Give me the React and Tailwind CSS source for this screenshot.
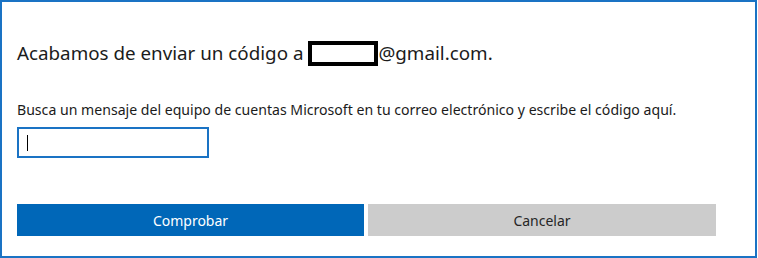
const App = () => {
  return (
    <div
      className="w-[758px] h-[258px] bg-white overflow-hidden"
      style={{ fontFamily: '"Noto Sans", "Open Sans", sans-serif' }}
    >
      <div className="w-[757px] h-[258px] border-t-2 border-l-2 border-b-2 border-r-2 border-[#1a73c4] pl-[15px] pt-[39px]">
        {/* heading */}
        <h1 className="flex items-center h-[25px] text-[18.8px] leading-[25px] text-[#1b1b1b] font-normal">
          <span>Acabamos de enviar un código a</span>
          <span className="inline-block ml-[5px] w-[70px] h-[25px] border-4 border-black bg-white"></span>
          <span>@gmail.com.</span>
        </h1>

        {/* description */}
        <p className="mt-[35px] text-[14.1px] leading-[18px] text-[#1b1b1b]">
          Busca un mensaje del equipo de cuentas Microsoft en tu correo electrónico y escribe el código aquí.
        </p>

        {/* code input with caret */}
        <div className="mt-[8px] w-[192px] h-[31px] border-2 border-[#1a73c4] flex items-center pl-[8px]">
          <span className="w-px h-[16px] bg-black"></span>
        </div>

        {/* buttons */}
        <div className="mt-[46px] flex gap-[4px]">
          <button className="w-[347px] h-[32px] bg-[#0067b8] text-white text-[14px]">
            Comprobar
          </button>
          <button className="w-[348px] h-[32px] bg-[#cccccc] text-[#262626] text-[14px]">
            Cancelar
          </button>
        </div>
      </div>
    </div>
  );
};

export default App;
